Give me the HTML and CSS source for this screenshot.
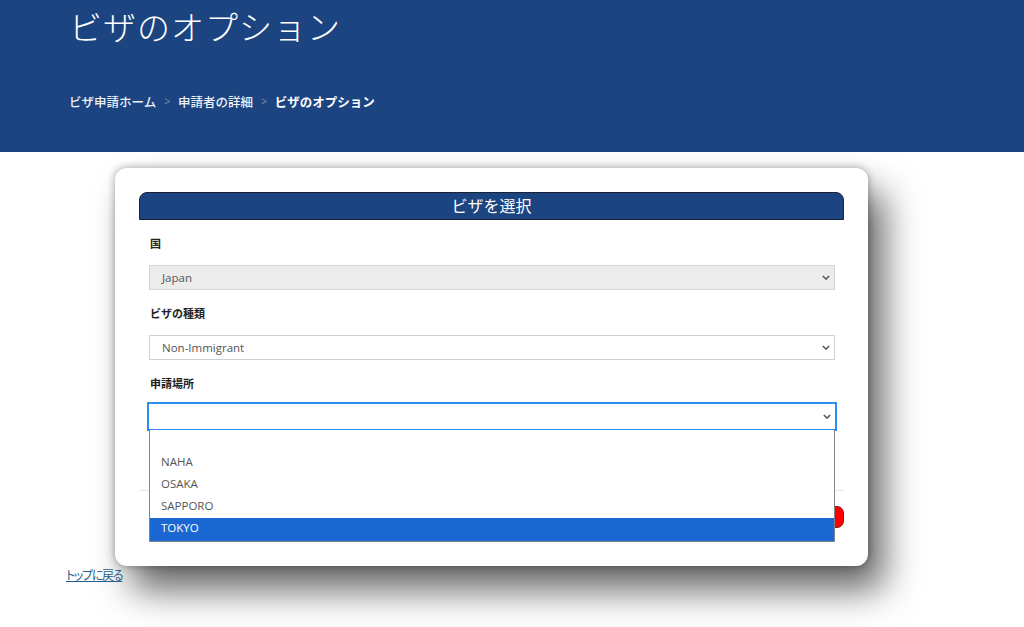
FILE: index.html
```html
<!DOCTYPE html>
<html lang="ja">
<head>
<meta charset="utf-8">
<title>ビザのオプション</title>
<link rel="stylesheet" href="styles.css">
</head>
<body>
<header class="hero">
  <h1 class="hero-title">ビザのオプション</h1>
  <nav class="crumbs">
    <span class="crumb">ビザ申請ホーム</span>
    <span class="sep">&gt;</span>
    <span class="crumb">申請者の詳細</span>
    <span class="sep">&gt;</span>
    <span class="crumb current">ビザのオプション</span>
  </nav>
</header>

<main class="page">
  <section class="card">
    <div class="card-head">ビザを選択</div>
    <div class="form">
      <div class="field">
        <div class="label">国</div>
        <div class="select disabled"><span class="value">Japan</span><svg class="chev" viewBox="0 0 10 6"><path d="M1 1l4 4 4-4" fill="none" stroke="#555" stroke-width="1.8"/></svg></div>
      </div>
      <div class="field">
        <div class="label">ビザの種類</div>
        <div class="select"><span class="value">Non-Immigrant</span><svg class="chev" viewBox="0 0 10 6"><path d="M1 1l4 4 4-4" fill="none" stroke="#555" stroke-width="1.8"/></svg></div>
      </div>
      <div class="field last">
        <div class="label">申請場所</div>
        <div class="select-wrap">
          <div class="select focused"><span class="value"></span><svg class="chev" viewBox="0 0 10 6"><path d="M1 1l4 4 4-4" fill="none" stroke="#555" stroke-width="1.8"/></svg></div>
          <ul class="dropdown">
            <li class="opt blank">&nbsp;</li>
            <li class="opt">NAHA</li>
            <li class="opt">OSAKA</li>
            <li class="opt">SAPPORO</li>
            <li class="opt selected">TOKYO</li>
          </ul>
        </div>
      </div>
    </div>
    <div class="rule"></div>
    <div class="actions"><button class="btn-red">次へ</button></div>
  </section>
  <a class="back" href="#">トップに戻る</a>
</main>
</body>
</html>
```
FILE: styles.css
```css
html, body {
  margin: 0;
  padding: 0;
  background: #fff;
  font-family: "Open Sans", "Noto Sans", "Noto Sans CJK JP", sans-serif;
}
body {
  min-height: 627px;
}
.hero {
  height: 152px;
  background: #1b4480;
  box-sizing: border-box;
  padding-left: 69px;
  display: flex;
  flex-direction: column;
}
.hero-title {
  margin: 0;
  padding-top: 9px;
  height: 40px;
  line-height: 40px;
  font-family: "Liberation Serif", "Noto Sans CJK JP", serif;
  font-weight: 300;
  font-size: 33px;
  letter-spacing: 1px;
  color: #fff;
}
.crumbs {
  margin-top: 44px;
  height: 18px;
  line-height: 18px;
  font-family: "Noto Sans CJK JP", sans-serif;
  font-size: 12.5px;
  font-weight: 500;
  color: #eef1f6;
  display: flex;
  gap: 6px;
}
.crumb.current {
  font-weight: 700;
  color: #fff;
}
.sep {
  color: #7d8ba3;
  font-size: 10px;
  font-family: "Liberation Sans", sans-serif;
  padding: 0 2px;
}
.page {
  padding-top: 16px;
  padding-bottom: 60px;
}
.card {
  margin-left: 115px;
  width: 753px;
  height: 398px;
  box-sizing: border-box;
  padding: 24px 24px 0 24px;
  background: #fff;
  border-radius: 12px;
  box-shadow: 0 0 8px rgba(0,0,0,0.35), 16px 24px 36px rgba(0,0,0,0.6);
}
.card-head {
  height: 28px;
  box-sizing: border-box;
  background: #1b4480;
  border: 1px solid #1a2336;
  border-radius: 8px 8px 0 0;
  color: #fff;
  text-align: center;
  font-family: "Noto Sans CJK JP", sans-serif;
  font-size: 16px;
  line-height: 25px;
}
.form {
  padding: 15px 9px 0 10px;
}
.field {
  margin-bottom: 15px;
}
.field.last {
  margin-bottom: 0;
}
.label {
  height: 16px;
  line-height: 16px;
  font-family: "Noto Sans CJK JP", sans-serif;
  font-size: 11px;
  font-weight: 700;
  color: #222;
  margin-bottom: 14px;
  padding-left: 1px;
}
.field.last .label {
  margin-bottom: 12px;
}
.select {
  height: 25px;
  box-sizing: border-box;
  border: 1px solid #d0d0d0;
  background: #fff;
  display: flex;
  align-items: center;
  padding-left: 12px;
  padding-right: 4px;
  font-size: 11.5px;
  color: #555;
}
.select.disabled {
  background: #ececec;
  border-color: #d6d6d6;
}
.select .value {
  flex: 1;
}
.chev {
  width: 8px;
  height: 5px;
}
.select-wrap {
  position: relative;
}
.select.focused {
  height: 27px;
  border: 1px solid #6d7f99;
  outline: 2px solid #2b8ef0;
  outline-offset: -1px;
  margin-left: -1px;
  margin-right: -1px;
}
.dropdown {
  position: absolute;
  left: 0;
  right: 0;
  top: 27px;
  margin: 0;
  padding: 0;
  list-style: none;
  background: #fff;
  border: 1px solid #7f8690;
  border-top: none;
  z-index: 5;
}
.opt {
  height: 22px;
  line-height: 20px;
  padding-left: 11px;
  font-size: 11.5px;
  color: #555;
}
.opt.selected {
  background: #1b67d2;
  color: #fff;
  height: 23px;
}
.rule {
  margin-top: 60px;
  height: 1px;
  background: #e6e6e6;
}
.actions {
  display: flex;
  justify-content: flex-end;
  margin-top: 15px;
}
.btn-red {
  width: 90px;
  height: 22px;
  background: #ff0000;
  border: 1px solid #8a1a1a;
  border-radius: 7px;
  color: #fff;
  font-size: 12px;
}
.back {
  display: block;
  width: max-content;
  margin-left: 66px;
  margin-top: 2px;
  font-family: "Noto Sans CJK JP", sans-serif;
  font-feature-settings: "palt";
  font-size: 12px;
  line-height: 14px;
  color: #1f5f8f;
  letter-spacing: -1.3px;
}
```
